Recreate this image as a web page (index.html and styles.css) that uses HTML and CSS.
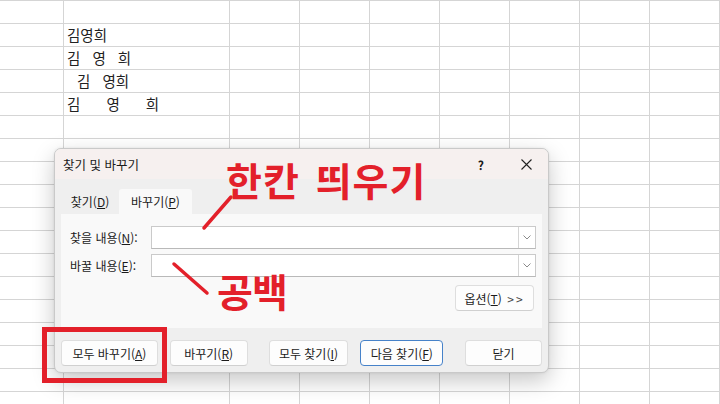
FILE: index.html
```html
<!DOCTYPE html>
<html lang="ko">
<head>
    <meta charset="UTF-8">
    <meta name="viewport" content="width=device-width, initial-scale=1.0">
    <title>찾기 및 바꾸기</title>
    <link rel="stylesheet" href="styles.css">
</head>
<body>
    <div class="sheet">
        <div class="col col-a"></div>
        <div class="col col-b">
            <div class="cell"></div>
            <div class="cell">김영희</div>
            <div class="cell spaced">김 영 희</div>
            <div class="cell spaced lead"> 김 영희</div>
            <div class="cell wide">김 영 희</div>
        </div>
        <div class="col"></div>
        <div class="col"></div>
        <div class="col"></div>
        <div class="col"></div>
        <div class="col"></div>
        <div class="col"></div>
        <div class="col"></div>
        <div class="col col-last"></div>
    </div>

    <div class="dialog">
        <div class="titlebar">
            <span class="title">찾기 및 바꾸기</span>
            <span class="help">?</span>
            <span class="close">
                <svg width="11" height="11" viewBox="0 0 11 11">
                    <path d="M0.5 0.5 L10.5 10.5 M10.5 0.5 L0.5 10.5" stroke="#222" stroke-width="1.1" fill="none"/>
                </svg>
            </span>
        </div>
        <div class="dialog-body">
            <div class="tabs">
                <div class="tab">찾기(<u>D</u>)</div>
                <div class="tab active">바꾸기(<u>P</u>)</div>
            </div>
            <div class="panel">
                <div class="field">
                    <label>찾을 내용(<u>N</u>):</label>
                    <div class="combo">
                        <span class="combo-input"></span>
                        <span class="combo-btn">
                            <svg width="8" height="5" viewBox="0 0 8 5"><path d="M0.5 0.5 L4 4 L7.5 0.5" stroke="#8a8a8a" fill="none"/></svg>
                        </span>
                    </div>
                </div>
                <div class="field">
                    <label>바꿀 내용(<u>E</u>):</label>
                    <div class="combo">
                        <span class="combo-input"></span>
                        <span class="combo-btn">
                            <svg width="8" height="5" viewBox="0 0 8 5"><path d="M0.5 0.5 L4 4 L7.5 0.5" stroke="#8a8a8a" fill="none"/></svg>
                        </span>
                    </div>
                </div>
                <div class="panel-foot">
                    <button class="btn btn-options">옵션(<u>T</u>) <span class="arrows">&gt;&gt;</span></button>
                </div>
            </div>
            <div class="actions">
                <button class="btn btn-all">모두 바꾸기(<u>A</u>)</button>
                <button class="btn btn-replace">바꾸기(<u>R</u>)</button>
                <button class="btn btn-findall">모두 찾기(<u>I</u>)</button>
                <button class="btn btn-next focused">다음 찾기(<u>F</u>)</button>
                <button class="btn btn-close">닫기</button>
            </div>
        </div>
    </div>

    <!-- red annotations -->
    <div class="note note-space">한칸 띄우기</div>
    <div class="note note-blank">공백</div>
    <div class="highlight"></div>
    <svg class="marks" width="720" height="404" viewBox="0 0 720 404">
        <line x1="231" y1="197" x2="204" y2="228" stroke="#e3202a" stroke-width="3.5" stroke-linecap="round"/>
        <line x1="174" y1="264" x2="207" y2="293" stroke="#e3202a" stroke-width="3.5" stroke-linecap="round"/>
    </svg>
</body>
</html>
```

FILE: styles.css
```css
* {
    margin: 0;
    padding: 0;
    box-sizing: border-box;
    font-family: "Noto Sans CJK KR", "Noto Sans", sans-serif;
}

body {
    width: 720px;
    height: 404px;
    overflow: hidden;
    position: relative;
    background: #fff;
    color: #1b1b1b;
}

/* spreadsheet */
.sheet {
    display: flex;
    height: 404px;
    background: repeating-linear-gradient(to bottom, #d5d5d5 0, #d5d5d5 1px, #fff 1px, #fff 23px);
}

.col {
    width: 70px;
    flex-shrink: 0;
    border-left: 1px solid #d5d5d5;
}

.col-a {
    width: 63px;
    border-left: none;
}

.col-b {
    width: 166px;
}

.col-last {
    width: 30px;
}

.cell {
    height: 23px;
    line-height: 24px;
    padding-left: 3px;
    font-size: 14.5px;
    color: #222;
    white-space: pre;
}

.cell.spaced {
    word-spacing: 8px;
}

.cell.lead {
    padding-left: 1px;
}

.cell.wide {
    word-spacing: 22px;
}

/* dialog */
.dialog {
    position: absolute;
    left: 54px;
    top: 148px;
    width: 495px;
    height: 225px;
    background: #efefef;
    border: 1px solid #c9c9c9;
    border-radius: 7px;
    box-shadow: 0 8px 22px rgba(0, 0, 0, 0.22), 0 0 3px rgba(0, 0, 0, 0.08);
    overflow: hidden;
}

.titlebar {
    display: flex;
    align-items: center;
    height: 30px;
    padding-left: 8px;
    background: #f6f0ef;
    font-size: 12.5px;
}

.title {
    flex: 1;
}

.help {
    font-size: 12px;
    font-weight: 600;
    margin-right: 37px;
}

.close {
    display: flex;
    margin-right: 16px;
}

.dialog-body {
    padding: 10px 6px 0 6px;
}

.tabs {
    display: flex;
    height: 25px;
    font-size: 12px;
}

.tab {
    width: 56px;
    margin-left: 1px;
    line-height: 25px;
    text-align: center;
}

.tab.active {
    width: 73px;
    background: #f9f9f9;
    border-radius: 3px 3px 0 0;
}

.panel {
    height: 114px;
    padding: 12px 6px 0 9px;
    background: #f9f9f9;
}

.field {
    display: flex;
    align-items: center;
    height: 23px;
    margin-bottom: 5px;
    font-size: 12px;
}

.field label {
    width: 81px;
}

.combo {
    flex: 1;
    display: flex;
    height: 23px;
    background: #fff;
    border: 1px solid #cacaca;
    border-bottom-color: #b9b9b9;
}

.combo-input {
    flex: 1;
}

.combo-btn {
    width: 17px;
    display: flex;
    align-items: center;
    justify-content: center;
    border-left: 1px solid #d4d4d4;
}

.panel-foot {
    display: flex;
    justify-content: flex-end;
    margin-top: 8px;
    padding-right: 2px;
}

.btn {
    height: 26px;
    font-size: 12px;
    color: #1b1b1b;
    background: #fdfdfd;
    border: 1px solid #dedede;
    border-bottom-color: #d0d0d0;
    border-radius: 4px;
}

.btn-options {
    width: 79px;
}

.arrows {
    letter-spacing: 2px;
    margin-left: 2px;
    color: #444;
}

.actions {
    display: flex;
    margin-top: 12px;
}

.btn-all { width: 97px; }
.btn-replace { width: 78px; margin-left: 12px; }
.btn-findall { width: 80px; margin-left: 21px; }
.btn-next { width: 83px; margin-left: 12px; }
.btn-close { width: 77px; margin-left: 22px; }

.btn.focused {
    border: 1px solid #4682c9;
}

/* annotations */
.note {
    position: absolute;
    color: #e3202a;
    font-weight: 700;
    font-size: 39px;
    line-height: 1;
    white-space: nowrap;
}

.note-space {
    left: 226px;
    top: 160px;
    letter-spacing: 1px;
    word-spacing: 4px;
}

.note-blank {
    left: 217px;
    top: 271px;
    letter-spacing: -1px;
}

.highlight {
    position: absolute;
    left: 42px;
    top: 327px;
    width: 125px;
    height: 56px;
    border: 5px solid #e3202a;
}

.marks {
    position: absolute;
    left: 0;
    top: 0;
    pointer-events: none;
}
```
